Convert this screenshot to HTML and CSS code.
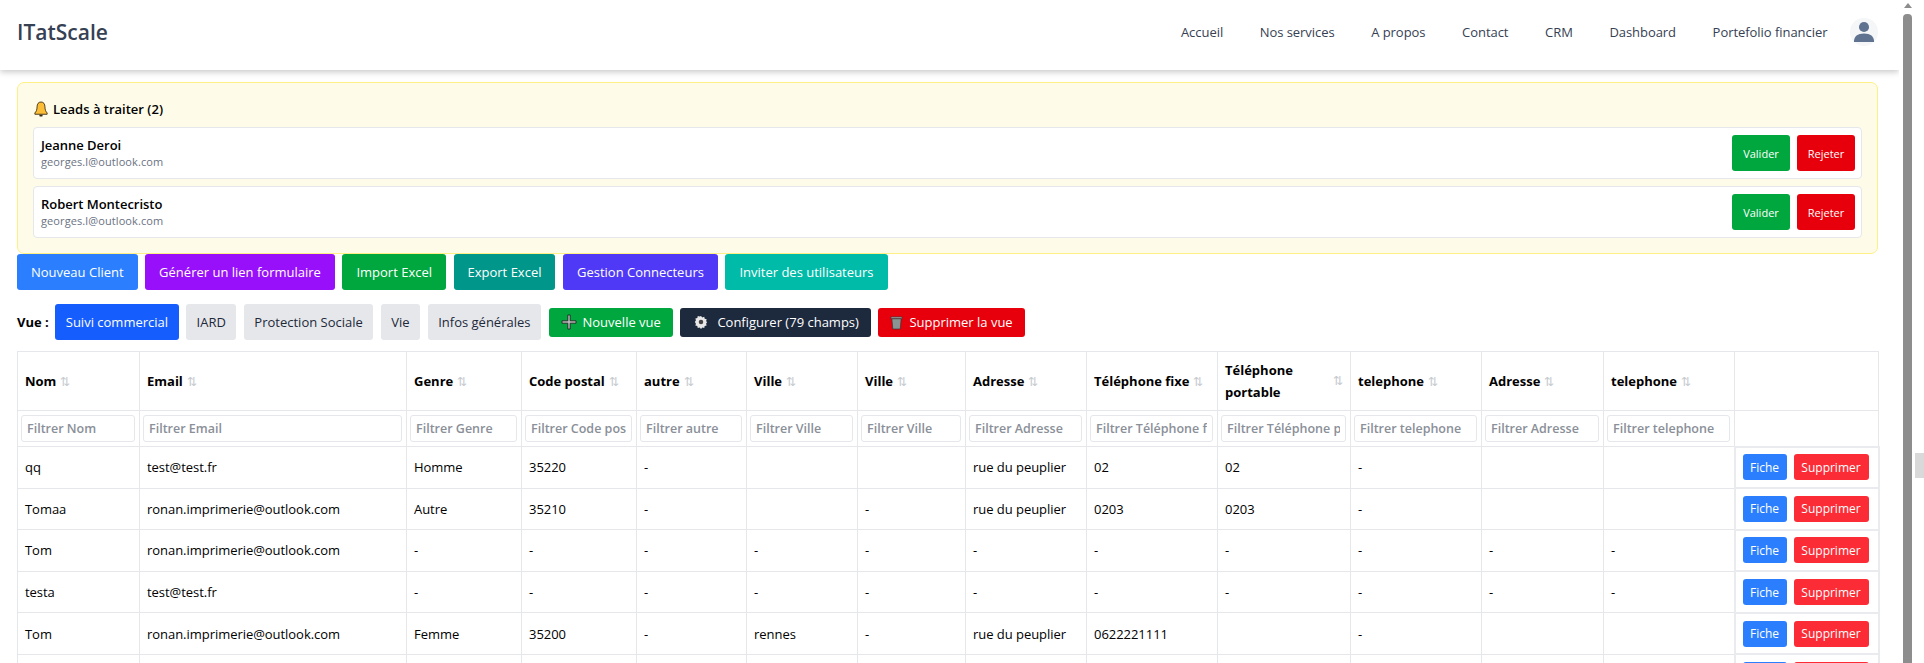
FILE: index.html
```html
<!DOCTYPE html>
<html lang="fr">
<head>
<meta charset="utf-8">
<title>ITatScale</title>
<link rel="stylesheet" href="styles.css">
</head>
<body>
<div class="viewport">
  <div class="page">
    <header class="nav">
      <div class="logo">ITatScale</div>
      <nav class="menu">
        <a>Accueil</a><a>Nos services</a><a>A propos</a><a>Contact</a><a>CRM</a><a>Dashboard</a><a>Portefolio financier</a>
        <span class="avatar"><svg viewBox="0 0 24 24" width="22" height="22"><circle cx="12" cy="6.500" r="5.500" fill="#5f7390"/><path d="M1 23c0-6.500 4-9.500 11-9.500s11 3 11 9.500z" fill="#5f7390"/></svg></span>
      </nav>
    </header>
    <main class="content">
      <section class="leads">
        <h2 class="leads-title"><svg class="bell" viewBox="0 0 16 18" width="14" height="16"><path d="M8 1c-3 0-4.500 2.300-4.500 5.500 0 3.500-1 5.500-2.500 7v1.500h14v-1.500c-1.500-1.500-2.500-3.500-2.500-7C12.500 3.300 11 1 8 1z" fill="#fbbd35" stroke="#3a2a10" stroke-width="1"/><path d="M6 15.500h4l-.5 2h-3z" fill="#3a2a10"/></svg> Leads à traiter (2)</h2>
        <div class="lead">
          <div><div class="lead-name">Jeanne Deroi</div><div class="lead-mail">georges.l@outlook.com</div></div>
          <div class="lead-actions"><button class="mini green">Valider</button><button class="mini red">Rejeter</button></div>
        </div>
        <div class="lead">
          <div><div class="lead-name">Robert Montecristo</div><div class="lead-mail">georges.l@outlook.com</div></div>
          <div class="lead-actions"><button class="mini green">Valider</button><button class="mini red">Rejeter</button></div>
        </div>
      </section>
      <div class="toolbar">
        <button class="btn blue">Nouveau Client</button>
        <button class="btn purple">Générer un lien formulaire</button>
        <button class="btn green">Import Excel</button>
        <button class="btn teal">Export Excel</button>
        <button class="btn indigo">Gestion Connecteurs</button>
        <button class="btn aqua">Inviter des utilisateurs</button>
      </div>
      <div class="views">
        <strong class="views-label">Vue :</strong>
        <button class="tab royal">Suivi commercial</button>
        <button class="tab grey">IARD</button>
        <button class="tab grey">Protection Sociale</button>
        <button class="tab grey">Vie</button>
        <button class="tab grey">Infos générales</button>
        <button class="act green"><svg viewBox="0 0 16 16" width="16" height="16"><path d="M6.800 1h2.400v5.800H15v2.400H9.200V15H6.800V9.200H1V6.800h5.800z" fill="#b8b8b8" stroke="#1a1a1a" stroke-width=".8"/></svg>Nouvelle vue</button>
        <button class="act navy gear"><svg viewBox="0 0 16 16" width="14" height="14"><path d="M8 1l1.500 1.800 2.200-.7.500 2.200 2.300.6-.7 2.200L15 8l-1.200 1.900.7 2.200-2.300.6-.5 2.200-2.200-.7L8 16l-1.500-1.800-2.200.7-.5-2.200-2.300-.6.7-2.200L1 8l1.200-1.900-.7-2.200 2.300-.6.500-2.200 2.200.7z" fill="#e8e8e8"/><circle cx="8" cy="8" r="2.600" fill="#444"/></svg>Configurer (79 champs)</button>
        <button class="act red"><svg viewBox="0 0 14 16" width="13" height="15"><path d="M1 2h12v2H1z" fill="#aaa" stroke="#333" stroke-width=".7"/><path d="M2 4h10l-1 11H3z" fill="#8a9593" stroke="#333" stroke-width=".7"/></svg>Supprimer la vue</button>
      </div>
      <table class="grid">
        <colgroup>
          <col class="c1"><col class="c2"><col class="c3"><col class="c4"><col class="c5"><col class="c6"><col class="c7"><col class="c8"><col class="c9"><col class="c10"><col class="c11"><col class="c12"><col class="c13"><col class="c14">
        </colgroup>
        <thead>
          <tr class="head">
            <th>Nom<i>⇅</i></th><th>Email<i>⇅</i></th><th>Genre<i>⇅</i></th><th>Code postal<i>⇅</i></th><th>autre<i>⇅</i></th><th>Ville<i>⇅</i></th><th>Ville<i>⇅</i></th><th>Adresse<i>⇅</i></th><th>Téléphone fixe<i>⇅</i></th>
            <th><div class="th-wrap"><span>Téléphone portable</span><i>⇅</i></div></th>
            <th>telephone<i>⇅</i></th><th>Adresse<i>⇅</i></th><th>telephone<i>⇅</i></th><th></th>
          </tr>
          <tr class="filters">
            <td><input placeholder="Filtrer Nom"></td><td><input placeholder="Filtrer Email"></td><td><input placeholder="Filtrer Genre"></td><td><input placeholder="Filtrer Code postal"></td><td><input placeholder="Filtrer autre"></td><td><input placeholder="Filtrer Ville"></td><td><input placeholder="Filtrer Ville"></td><td><input placeholder="Filtrer Adresse"></td><td><input placeholder="Filtrer Téléphone fixe"></td><td><input placeholder="Filtrer Téléphone portable"></td><td><input placeholder="Filtrer telephone"></td><td><input placeholder="Filtrer Adresse"></td><td><input placeholder="Filtrer telephone"></td><td></td>
          </tr>
        </thead>
        <tbody>
          <tr><td>qq</td><td>test@test.fr</td><td>Homme</td><td>35220</td><td>-</td><td></td><td></td><td>rue du peuplier</td><td>02</td><td>02</td><td>-</td><td></td><td></td><td class="row-actions"><button class="row-btn fiche blue">Fiche</button><button class="row-btn suppr rose">Supprimer</button></td></tr>
          <tr><td>Tomaa</td><td>ronan.imprimerie@outlook.com</td><td>Autre</td><td>35210</td><td>-</td><td></td><td>-</td><td>rue du peuplier</td><td>0203</td><td>0203</td><td>-</td><td></td><td></td><td class="row-actions"><button class="row-btn fiche blue">Fiche</button><button class="row-btn suppr rose">Supprimer</button></td></tr>
          <tr><td>Tom</td><td>ronan.imprimerie@outlook.com</td><td>-</td><td>-</td><td>-</td><td>-</td><td>-</td><td>-</td><td>-</td><td>-</td><td>-</td><td>-</td><td>-</td><td class="row-actions"><button class="row-btn fiche blue">Fiche</button><button class="row-btn suppr rose">Supprimer</button></td></tr>
          <tr><td>testa</td><td>test@test.fr</td><td>-</td><td>-</td><td>-</td><td>-</td><td>-</td><td>-</td><td>-</td><td>-</td><td>-</td><td>-</td><td>-</td><td class="row-actions"><button class="row-btn fiche blue">Fiche</button><button class="row-btn suppr rose">Supprimer</button></td></tr>
          <tr><td>Tom</td><td>ronan.imprimerie@outlook.com</td><td>Femme</td><td>35200</td><td>-</td><td>rennes</td><td>-</td><td>rue du peuplier</td><td>0622221111</td><td></td><td>-</td><td></td><td></td><td class="row-actions"><button class="row-btn fiche blue">Fiche</button><button class="row-btn suppr rose">Supprimer</button></td></tr>
          <tr><td></td><td></td><td></td><td></td><td></td><td></td><td></td><td></td><td></td><td></td><td></td><td></td><td></td><td class="row-actions"><button class="row-btn fiche blue"></button><button class="row-btn suppr rose"></button></td></tr>
        </tbody>
      </table>
    </main>
  </div>
  <div class="scroll-outer"><span class="arrow"></span><span class="thumb"></span></div>
  <div class="scroll-far"><span class="far-thumb"></span></div>
</div>
</body>
</html>
```
FILE: styles.css
```css
* { box-sizing: border-box; }
html, body { margin: 0; height: 100%; overflow: hidden; }
body { font-family: "Open Sans", "Noto Sans", sans-serif; font-size: 13px; color: #000; background: #fff; }
button { font-family: inherit; border: 0; color: #fff; cursor: pointer; }
.viewport { display: flex; width: 1924px; height: 663px; overflow: hidden; }
.page { width: 1899px; flex: none; height: 663px; overflow: hidden; }
.nav { height: 70px; display: flex; align-items: center; justify-content: space-between; padding: 0 21px 6px 17px; background: #fff; box-shadow: 0 2px 6px rgba(0,0,0,.22); }
.logo { font-size: 21px; font-weight: 600; color: #364153; }
.menu { display: flex; align-items: center; gap: 36.600px; font-size: 13px; letter-spacing: -.05px; color: #364153; }
.avatar { width: 28px; height: 28px; margin-left: -14px; border-radius: 50%; background: #f5f6f8; display: flex; align-items: center; justify-content: center; }
.content { padding: 12px 17px 0; width: 1895px; }
.leads { height: 172px; border: 1px solid #fff085; border-radius: 7px; background: #fefce8; padding: 16px 15px 0; }
.leads-title { display: flex; align-items: center; gap: 5px; margin: 0 0 8px 1px; height: 20px; font-size: 13px; font-weight: 600; }
.bell { flex: none; }
.lead { height: 52px; margin-bottom: 7px; display: flex; align-items: center; justify-content: space-between; padding: 0 6px 0 7px; background: #fff; border: 1px solid #e5e7eb; border-radius: 4px; }
.lead-name { font-size: 13px; font-weight: 600; margin-top: -1px; letter-spacing: -.03px; }
.lead-mail { font-size: 11px; letter-spacing: .1px; color: #6a7282; }
.lead-actions { display: flex; gap: 7px; }
.mini { width: 58px; height: 36px; padding: 0; font-size: 11px; border-radius: 3px; }
.green { background: #00a63e; }
.red { background: #e7000b; }
.blue { background: #2b7fff; }
.rose { background: #fb2c36; }
.purple { background: #9810fa; }
.teal { background: #009689; }
.indigo { background: #4f39f6; }
.aqua { background: #00bba7; }
.royal { background: #155dfc; }
.grey { background: #e5e7eb; color: #1e2939; }
.navy { background: #1d293d; }
.toolbar { display: flex; gap: 7.500px; }
.btn { height: 36px; padding: 0 14px; font-size: 13px; border-radius: 3px; }
.views { display: flex; align-items: center; gap: 7.500px; margin-top: 14px; height: 36px; }
.views-label { font-size: 13px; font-weight: 700; margin-right: -1px; }
.tab { height: 36px; padding: 0 10.500px; font-size: 13px; border-radius: 3px; }
.act { height: 29px; padding: 0 12px; font-size: 13px; border-radius: 3px; display: flex; align-items: center; gap: 6px; }
.gear { gap: 9px; padding: 0 12px 0 14px; }
.grid { margin-top: 11px; width: 1861px; table-layout: fixed; border-collapse: collapse; font-size: 13px; }
.grid th, .grid td { border: 1px solid #e5e7eb; padding: 0 7px; text-align: left; overflow: hidden; }
.c1 { width: 122px; } .c2 { width: 267px; } .c3 { width: 115px; } .c4 { width: 115px; } .c5 { width: 110px; } .c6 { width: 111px; } .c7 { width: 108px; } .c8 { width: 121px; } .c9 { width: 131px; } .c10 { width: 133px; } .c11 { width: 131px; } .c12 { width: 122px; } .c13 { width: 131px; } .c14 { width: 144px; }
.head { height: 59px; }
.head th { font-weight: 700; line-height: 22px; }
.head i { font-style: normal; font-weight: 400; font-size: 12px; color: #c4c8ce; margin-left: 4px; }
.th-wrap { display: flex; align-items: center; justify-content: space-between; }
.filters { height: 36px; }
.filters td { padding: 0 4px 0 3px; }
.filters input { display: block; width: 100%; height: 27px; padding: 0 5px; border: 1px solid #e5e7eb; border-radius: 3px; font-family: inherit; font-size: 12.500px; font-weight: 600; }
.filters input::placeholder { color: #8a8f98; opacity: 1; }
.grid tbody tr { height: 41.600px; }
.grid tbody td { letter-spacing: -.04px; }
.grid td.row-actions { padding: 0 0 0 7px; border: 2px solid #e9ebee; white-space: nowrap; }
.row-btn { height: 26px; padding: 0; font-size: 12px; border-radius: 3px; vertical-align: middle; }
.fiche { width: 44px; margin-right: 7px; }
.suppr { width: 75px; }
.scroll-outer { flex: none; width: 9px; height: 663px; margin-left: 4px; display: flex; flex-direction: column; align-items: center; }
.arrow { flex: none; margin-top: 3px; width: 0; height: 0; border-left: 4px solid transparent; border-right: 4px solid transparent; border-bottom: 5px solid #8d8d8d; }
.thumb { flex: 1; width: 9px; margin-top: 6px; background: #8d8d8d; border-radius: 4px 4px 0 0; }
.scroll-far { flex: none; width: 9px; margin-left: 3px; padding-top: 453px; }
.far-thumb { display: block; width: 9px; height: 25px; background: #d9d9d9; }
```
